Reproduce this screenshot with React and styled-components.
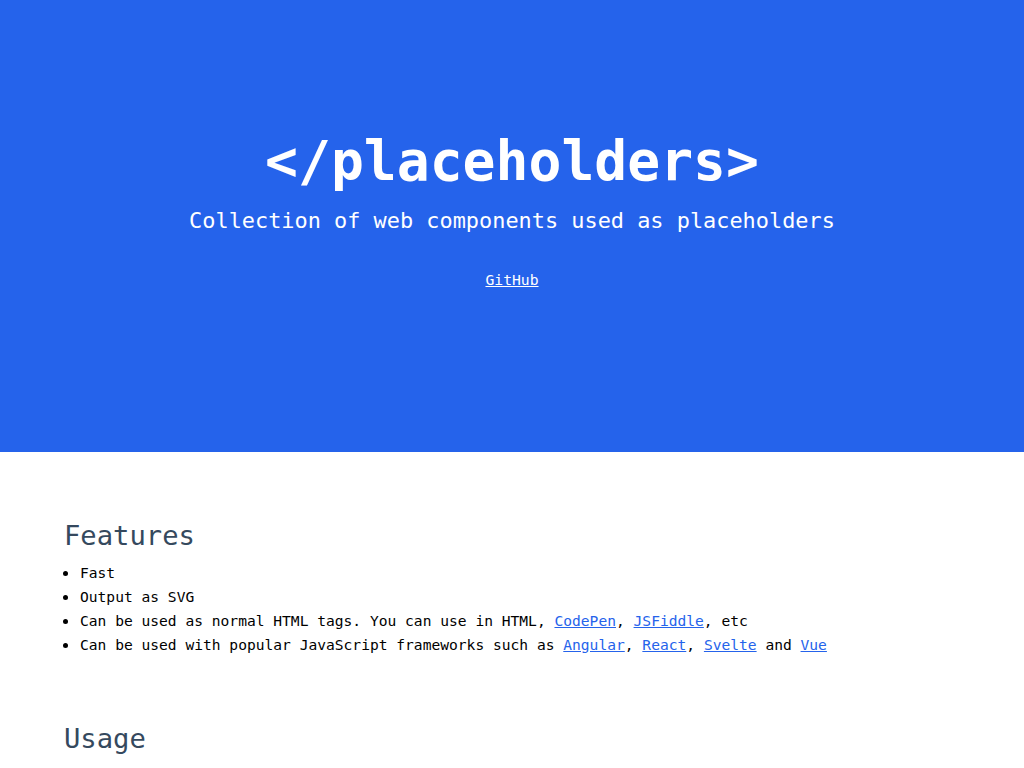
import React from "react";
import styled, { createGlobalStyle } from "styled-components";

const GlobalStyle = createGlobalStyle`
    body {
        margin: 0;
        font-family: "DejaVu Sans Mono", "Liberation Mono", monospace;
        background: #fff;
        color: #000;
    }
`;

const Hero = styled.header`
    background: #2563eb;
    color: #fff;
    height: 452px;
    display: flex;
    flex-direction: column;
    align-items: center;
    justify-content: center;
    text-align: center;
    padding-bottom: 35px;
    box-sizing: border-box;
`;

const Title = styled.h1`
    margin: 0;
    font-size: 54.7px;
    font-weight: bold;
    line-height: 1.2;
`;

const Subtitle = styled.p`
    margin: 12px 0 0;
    font-size: 21.9px;
    line-height: 1.3;
`;

const HeroLink = styled.a`
    margin-top: 35px;
    font-size: 14.7px;
    color: #fff;
`;

const Main = styled.main`
    display: flex;
    flex-direction: column;
    gap: 66px;
    padding: 68px 64px 0;
`;

const Section = styled.section``;

const Heading = styled.h2`
    margin: 0 0 8px;
    font-size: 27.2px;
    font-weight: normal;
    color: #35495e;
    line-height: 1.2;
`;

const List = styled.ul`
    margin: 0;
    padding: 0;
    list-style: none;
    font-size: 14.6px;
    line-height: 24px;
`;

const Item = styled.li`
    &::before {
        content: "";
        display: inline-block;
        width: 5px;
        height: 5px;
        border-radius: 50%;
        background: #000;
        margin: 0 12px 0 -1px;
        vertical-align: 2px;
    }
`;

const Link = styled.a`
    color: #2563eb;
`;

export default function App() {
    return (
        <>
            <GlobalStyle />
            <Hero>
                <Title>&lt;/placeholders&gt;</Title>
                <Subtitle>Collection of web components used as placeholders</Subtitle>
                <HeroLink href="#">GitHub</HeroLink>
            </Hero>
            <Main>
                <Section>
                    <Heading>Features</Heading>
                    <List>
                        <Item>Fast</Item>
                        <Item>Output as SVG</Item>
                        <Item>
                            Can be used as normal HTML tags. You can use in HTML,{" "}
                            <Link href="#">CodePen</Link>, <Link href="#">JSFiddle</Link>, etc
                        </Item>
                        <Item>
                            Can be used with popular JavaScript frameworks such as{" "}
                            <Link href="#">Angular</Link>, <Link href="#">React</Link>,{" "}
                            <Link href="#">Svelte</Link> and <Link href="#">Vue</Link>
                        </Item>
                    </List>
                </Section>
                <Section>
                    <Heading>Usage</Heading>
                </Section>
            </Main>
        </>
    );
}
